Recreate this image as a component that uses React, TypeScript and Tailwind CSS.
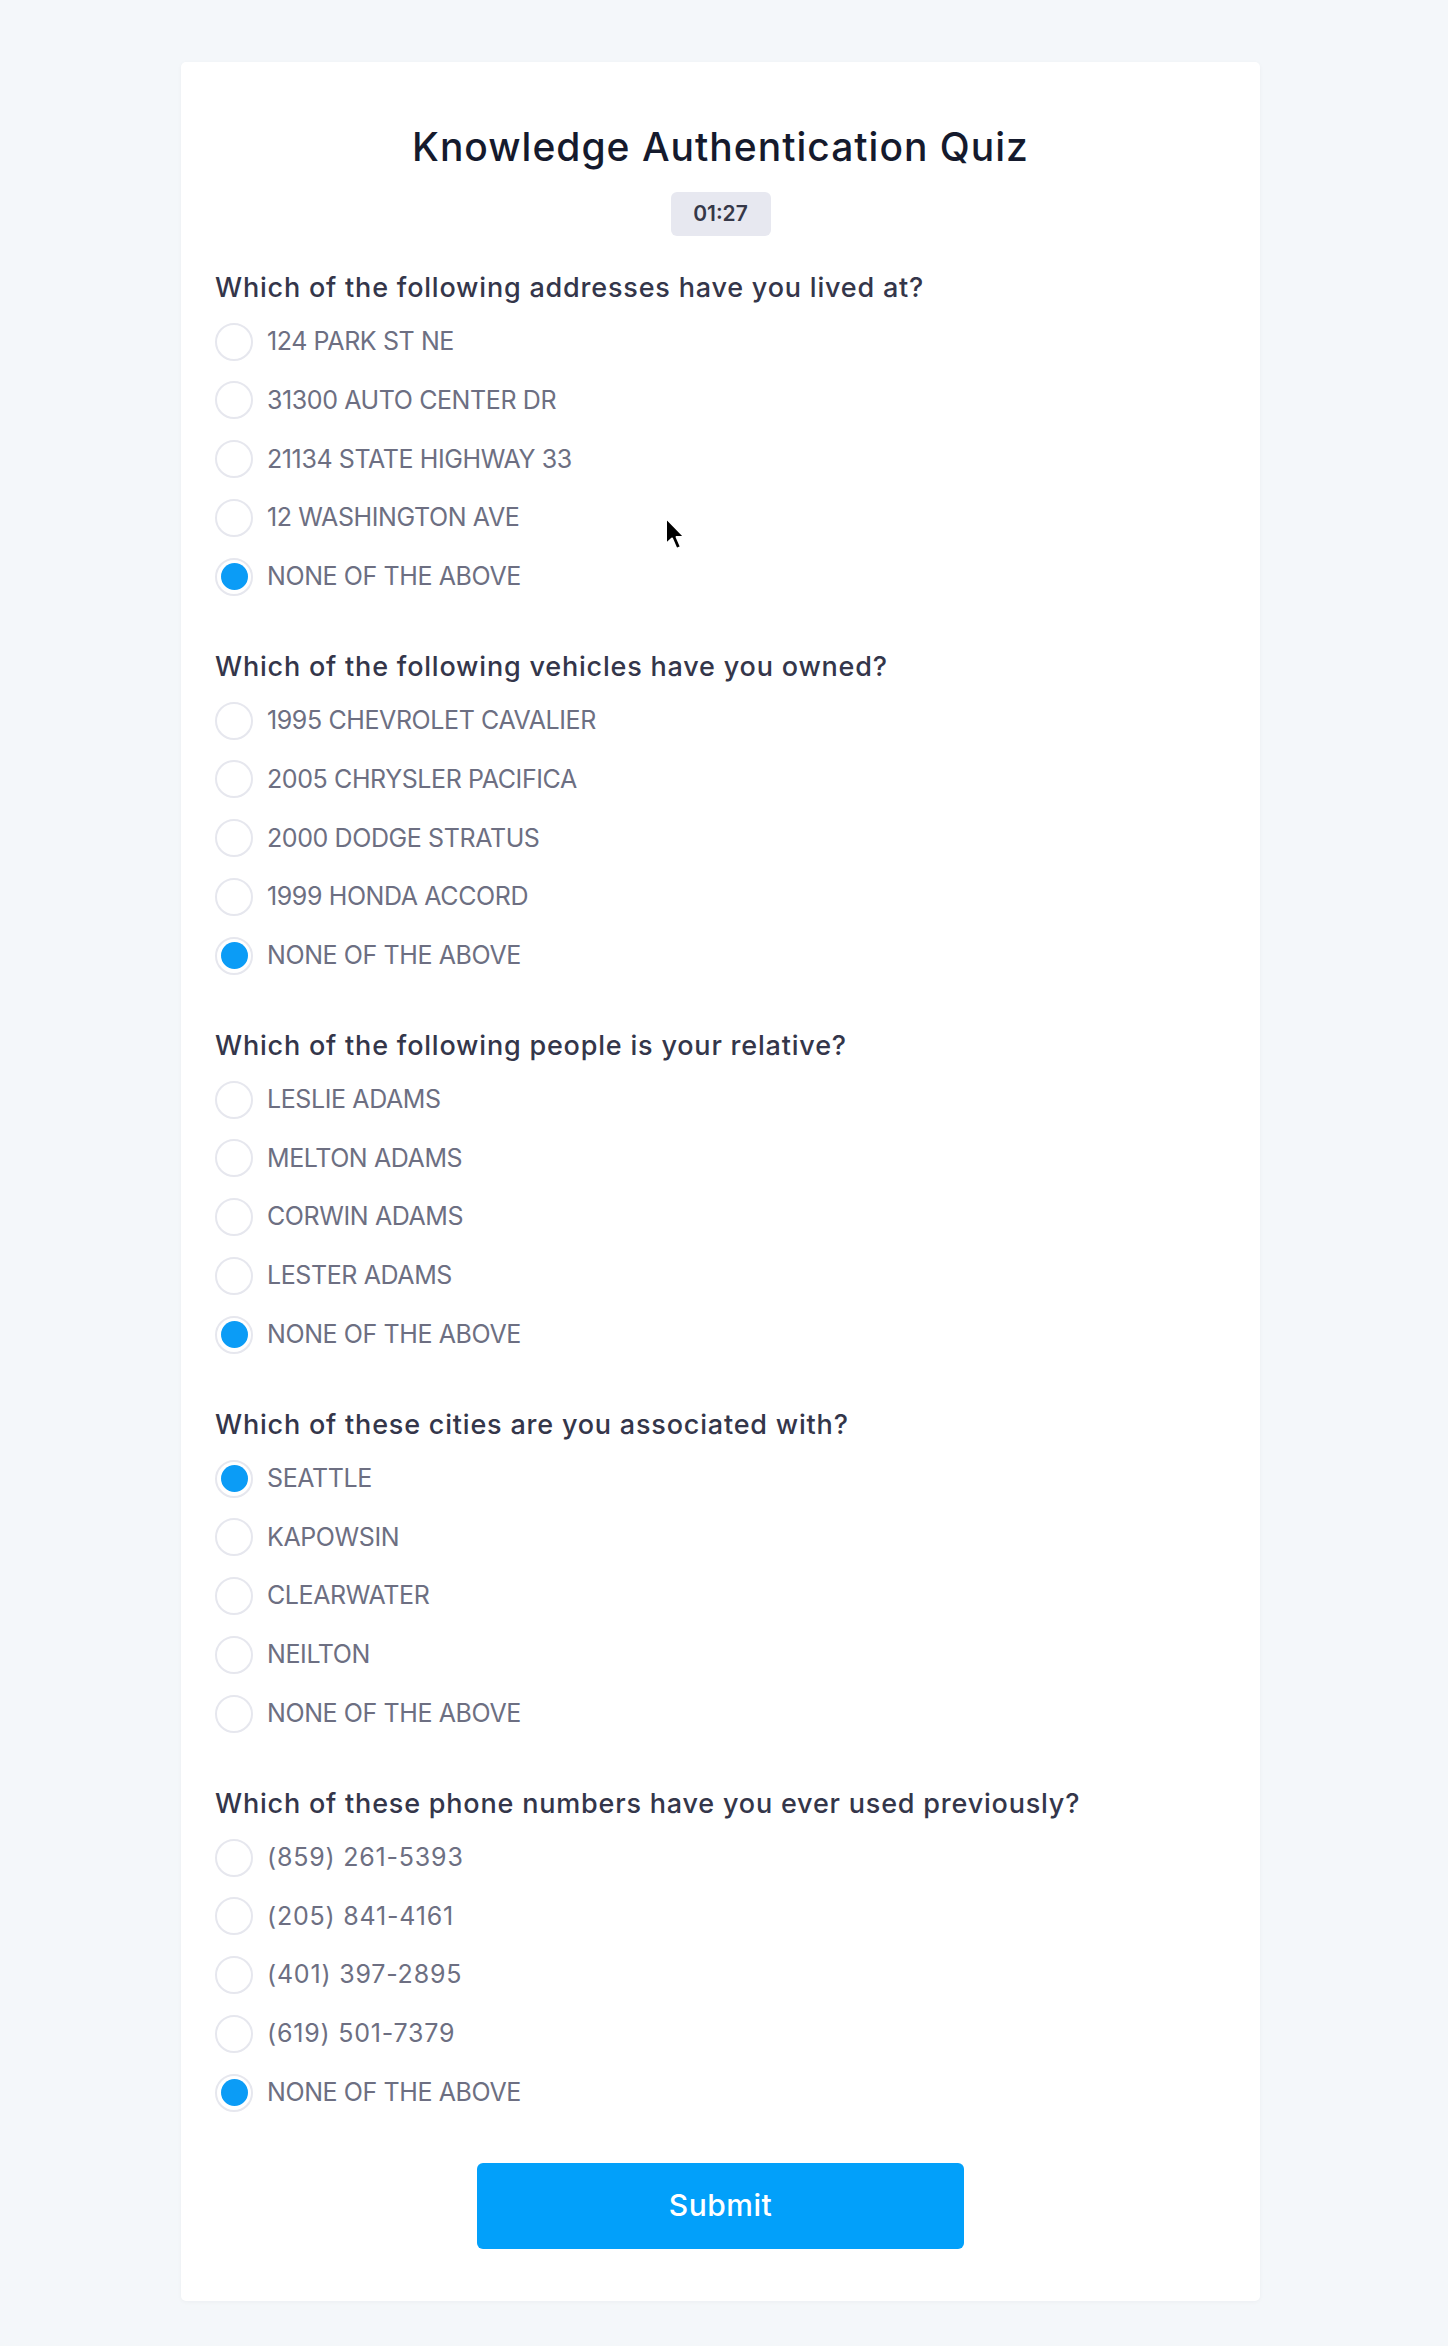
import React from "react";

type Q = { q: string; options: string[]; selected: number; numeric?: boolean };

const QUESTIONS: Q[] = [
  {
    q: "Which of the following addresses have you lived at?",
    options: ["124 PARK ST NE", "31300 AUTO CENTER DR", "21134 STATE HIGHWAY 33", "12 WASHINGTON AVE", "NONE OF THE ABOVE"],
    selected: 4,
  },
  {
    q: "Which of the following vehicles have you owned?",
    options: ["1995 CHEVROLET CAVALIER", "2005 CHRYSLER PACIFICA", "2000 DODGE STRATUS", "1999 HONDA ACCORD", "NONE OF THE ABOVE"],
    selected: 4,
  },
  {
    q: "Which of the following people is your relative?",
    options: ["LESLIE ADAMS", "MELTON ADAMS", "CORWIN ADAMS", "LESTER ADAMS", "NONE OF THE ABOVE"],
    selected: 4,
  },
  {
    q: "Which of these cities are you associated with?",
    options: ["SEATTLE", "KAPOWSIN", "CLEARWATER", "NEILTON", "NONE OF THE ABOVE"],
    selected: 0,
  },
  {
    q: "Which of these phone numbers have you ever used previously?",
    options: ["(859) 261-5393", "(205) 841-4161", "(401) 397-2895", "(619) 501-7379", "NONE OF THE ABOVE"],
    selected: 4,
    numeric: true,
  },
];

function Radio({ checked }: { checked: boolean }) {
  return (
    <span className="flex h-[38px] w-[38px] shrink-0 items-center justify-center rounded-full border-2 border-[#e6e7ee] bg-white">
      {checked && <span className="h-[27px] w-[27px] rounded-full bg-[#0b9cf6]" />}
    </span>
  );
}

export default function App() {
  return (
    <div
      className="relative min-h-[2346px] w-full bg-[#f4f7fa] pt-[62px] pr-[7px]"
      style={{ fontFamily: "Inter, 'Noto Sans', sans-serif" }}
    >
      <div className="mx-auto flex w-[1079px] flex-col items-stretch rounded-[5px] bg-white px-[34px] pt-[58px] pb-[52px] shadow-[0_1px_4px_rgba(15,23,42,0.04)]">
        <h1 className="text-center text-[39px] leading-[54px] font-medium tracking-[1px] text-[#151a2d]">
          Knowledge Authentication Quiz
        </h1>
        <div className="mt-[18px] flex justify-center">
          <span className="flex h-[44px] w-[100px] items-center justify-center rounded-[6px] bg-[#e7e8f0] text-[21px] font-semibold text-[#363848]">
            01:27
          </span>
        </div>
        <div className="mt-[32px] flex flex-col gap-[40.7px]">
          {QUESTIONS.map((item, qi) => (
            <div key={qi} className="flex flex-col">
              <div className="text-[27px] leading-[40px] font-medium tracking-[0.8px] text-[#34364a]">{item.q}</div>
              <div className="mt-[4.3px] flex flex-col">
                {item.options.map((opt, oi) => (
                  <label key={oi} className="flex h-[58.8px] items-center gap-[14px]">
                    <Radio checked={oi === item.selected} />
                    <span
                      className={
                        item.numeric && opt.startsWith("(")
                          ? "text-[25px] tracking-[0.8px] text-[#6d6f82]"
                          : "text-[25px] tracking-[-0.4px] text-[#6d6f82]"
                      }
                    >
                      {opt}
                    </span>
                  </label>
                ))}
              </div>
            </div>
          ))}
        </div>
        <div className="mt-[40.6px] flex justify-center">
          <button className="h-[86px] w-[487px] rounded-[6px] bg-[#02a0fa] text-[30px] font-medium tracking-[0.5px] text-white">
            Submit
          </button>
        </div>
      </div>
      <svg
        className="absolute left-[664px] top-[516px]"
        width="24"
        height="36"
        viewBox="0 0 24 36"
      >
        <path
          d="M2 2 L2 28 L8 22.5 L12.5 33 L17 31 L12.6 21 L20.5 21 Z"
          fill="#000"
          stroke="#fff"
          strokeWidth="2"
          strokeLinejoin="round"
        />
      </svg>
    </div>
  );
}
